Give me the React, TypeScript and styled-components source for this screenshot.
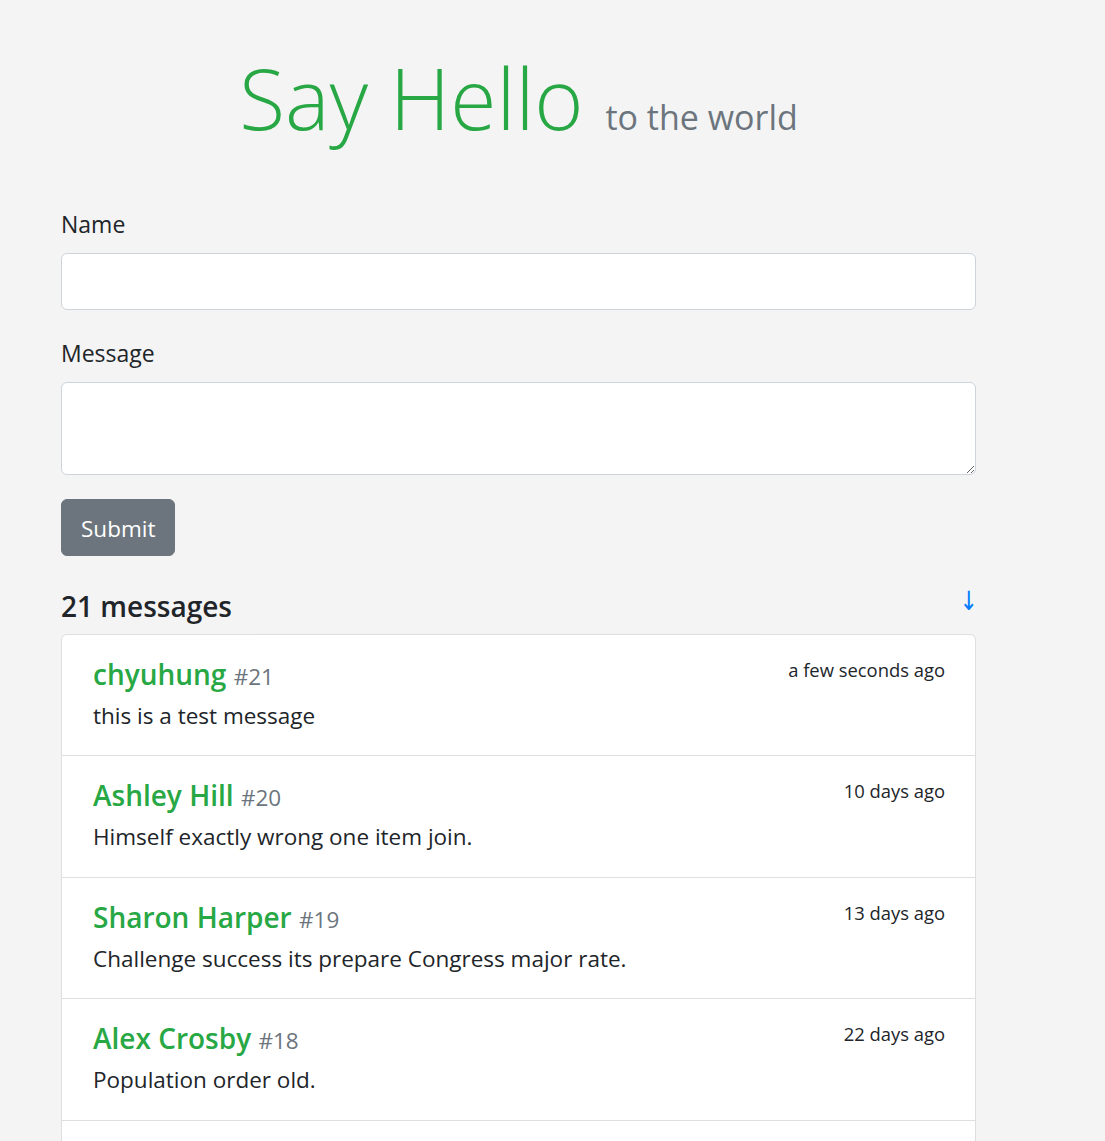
import React from 'react';
import styled, { createGlobalStyle } from 'styled-components';

const GlobalStyle = createGlobalStyle`
  *, *::before, *::after { box-sizing: border-box; }
  html, body { margin: 0; padding: 0; }
  body {
    background: #f4f4f4;
    font-family: "Open Sans", "Noto Sans", sans-serif;
    color: #212529;
    font-size: 22.5px;
    line-height: 1.5;
  }
`;

const Container = styled.main`
  width: 915px;
  margin-left: 61px;
  padding-top: 48px;
`;

const Title = styled.h1`
  margin: 0 0 56px;
  text-align: center;
  font-size: 84px;
  font-weight: 300;
  line-height: 1.2;
  color: #28a745;
`;

const Tagline = styled.small`
  font-size: 34px;
  font-weight: 400;
  color: #6c757d;
  line-height: 1;
`;

const FormGroup = styled.div`
  margin-bottom: 24px;
`;

const Label = styled.label`
  display: block;
  margin-bottom: 12px;
  font-size: 23px;
  line-height: 36px;
  padding-top: 1px;
  height: 36px;
`;

const Input = styled.input`
  display: block;
  width: 100%;
  height: 57px;
  padding: 9px 18px;
  font: inherit;
  color: #495057;
  background: #fff;
  border: 1px solid #ced4da;
  border-radius: 6px;
  outline: none;
`;

const TextArea = styled.textarea`
  display: block;
  width: 100%;
  height: 93px;
  padding: 9px 18px;
  font: inherit;
  color: #495057;
  background: #fff;
  border: 1px solid #ced4da;
  border-radius: 6px;
  resize: vertical;
  outline: none;
`;

const Button = styled.button`
  display: inline-block;
  padding: 4px 19px 0;
  font: inherit;
  font-size: 22.5px;
  line-height: 1.5;
  color: #fff;
  background: #6c757d;
  border: 1px solid #6c757d;
  border-radius: 6px;
  height: 57px;
  cursor: pointer;
`;

const ListHeader = styled.div`
  display: flex;
  justify-content: space-between;
  align-items: center;
  margin-top: 32px;
  margin-bottom: 10px;
  height: 36px;
`;

const Count = styled.h5`
  margin: 0;
  font-size: 28px;
  font-weight: 600;
  line-height: 36px;
`;

const ArrowLink = styled.a`
  color: #007bff;
  text-decoration: none;
  font-family: "DejaVu Sans", sans-serif;
  font-size: 22px;
  line-height: 1;
  margin-right: -2px;
  margin-top: -8px;
  transform: scaleY(1.2);
`;

const List = styled.ul`
  list-style: none;
  margin: 0;
  padding: 0;
  background: #fff;
  border: 1px solid rgba(0, 0, 0, 0.125);
  border-bottom: none;
  border-radius: 6px 6px 0 0;
`;

const Item = styled.li`
  padding: 21px 30px 21.5px 31px;
  border-bottom: 1px solid rgba(0, 0, 0, 0.125);
`;

const ItemHead = styled.div`
  display: flex;
  justify-content: space-between;
  height: 42px;
`;

const Name = styled.h5`
  margin: 0;
  height: 36px;
  font-size: 28px;
  font-weight: 600;
  line-height: 36px;
  color: #28a745;
`;

const Num = styled.small`
  font-size: 22.5px;
  font-weight: 400;
  line-height: 1;
  color: #6c757d;
`;

const Time = styled.small`
  font-size: 18.4px;
  line-height: 1.5;
`;

const Text = styled.p`
  margin: 0;
  height: 36px;
  line-height: 36px;
`;

const messages = [
  { id: 21, name: 'chyuhung', time: 'a few seconds ago', text: 'this is a test message' },
  { id: 20, name: 'Ashley Hill', time: '10 days ago', text: 'Himself exactly wrong one item join.' },
  { id: 19, name: 'Sharon Harper', time: '13 days ago', text: 'Challenge success its prepare Congress major rate.' },
  { id: 18, name: 'Alex Crosby', time: '22 days ago', text: 'Population order old.' },
  { id: 17, name: 'Maria Lopez', time: '25 days ago', text: 'Those avoid local board.' },
];

export default function App() {
  return (
    <>
      <GlobalStyle />
      <Container>
        <Title>
          Say Hello <Tagline>to the world</Tagline>
        </Title>
        <form onSubmit={(e) => e.preventDefault()}>
          <FormGroup>
            <Label htmlFor="name">Name</Label>
            <Input id="name" type="text" />
          </FormGroup>
          <FormGroup>
            <Label htmlFor="message">Message</Label>
            <TextArea id="message" rows={2} />
          </FormGroup>
          <Button type="submit">Submit</Button>
        </form>
        <ListHeader>
          <Count>21 messages</Count>
          <ArrowLink href="#bottom">↓</ArrowLink>
        </ListHeader>
        <List>
          {messages.map((m) => (
            <Item key={m.id}>
              <ItemHead>
                <Name>
                  {m.name} <Num>#{m.id}</Num>
                </Name>
                <Time>{m.time}</Time>
              </ItemHead>
              <Text>{m.text}</Text>
            </Item>
          ))}
        </List>
      </Container>
    </>
  );
}
